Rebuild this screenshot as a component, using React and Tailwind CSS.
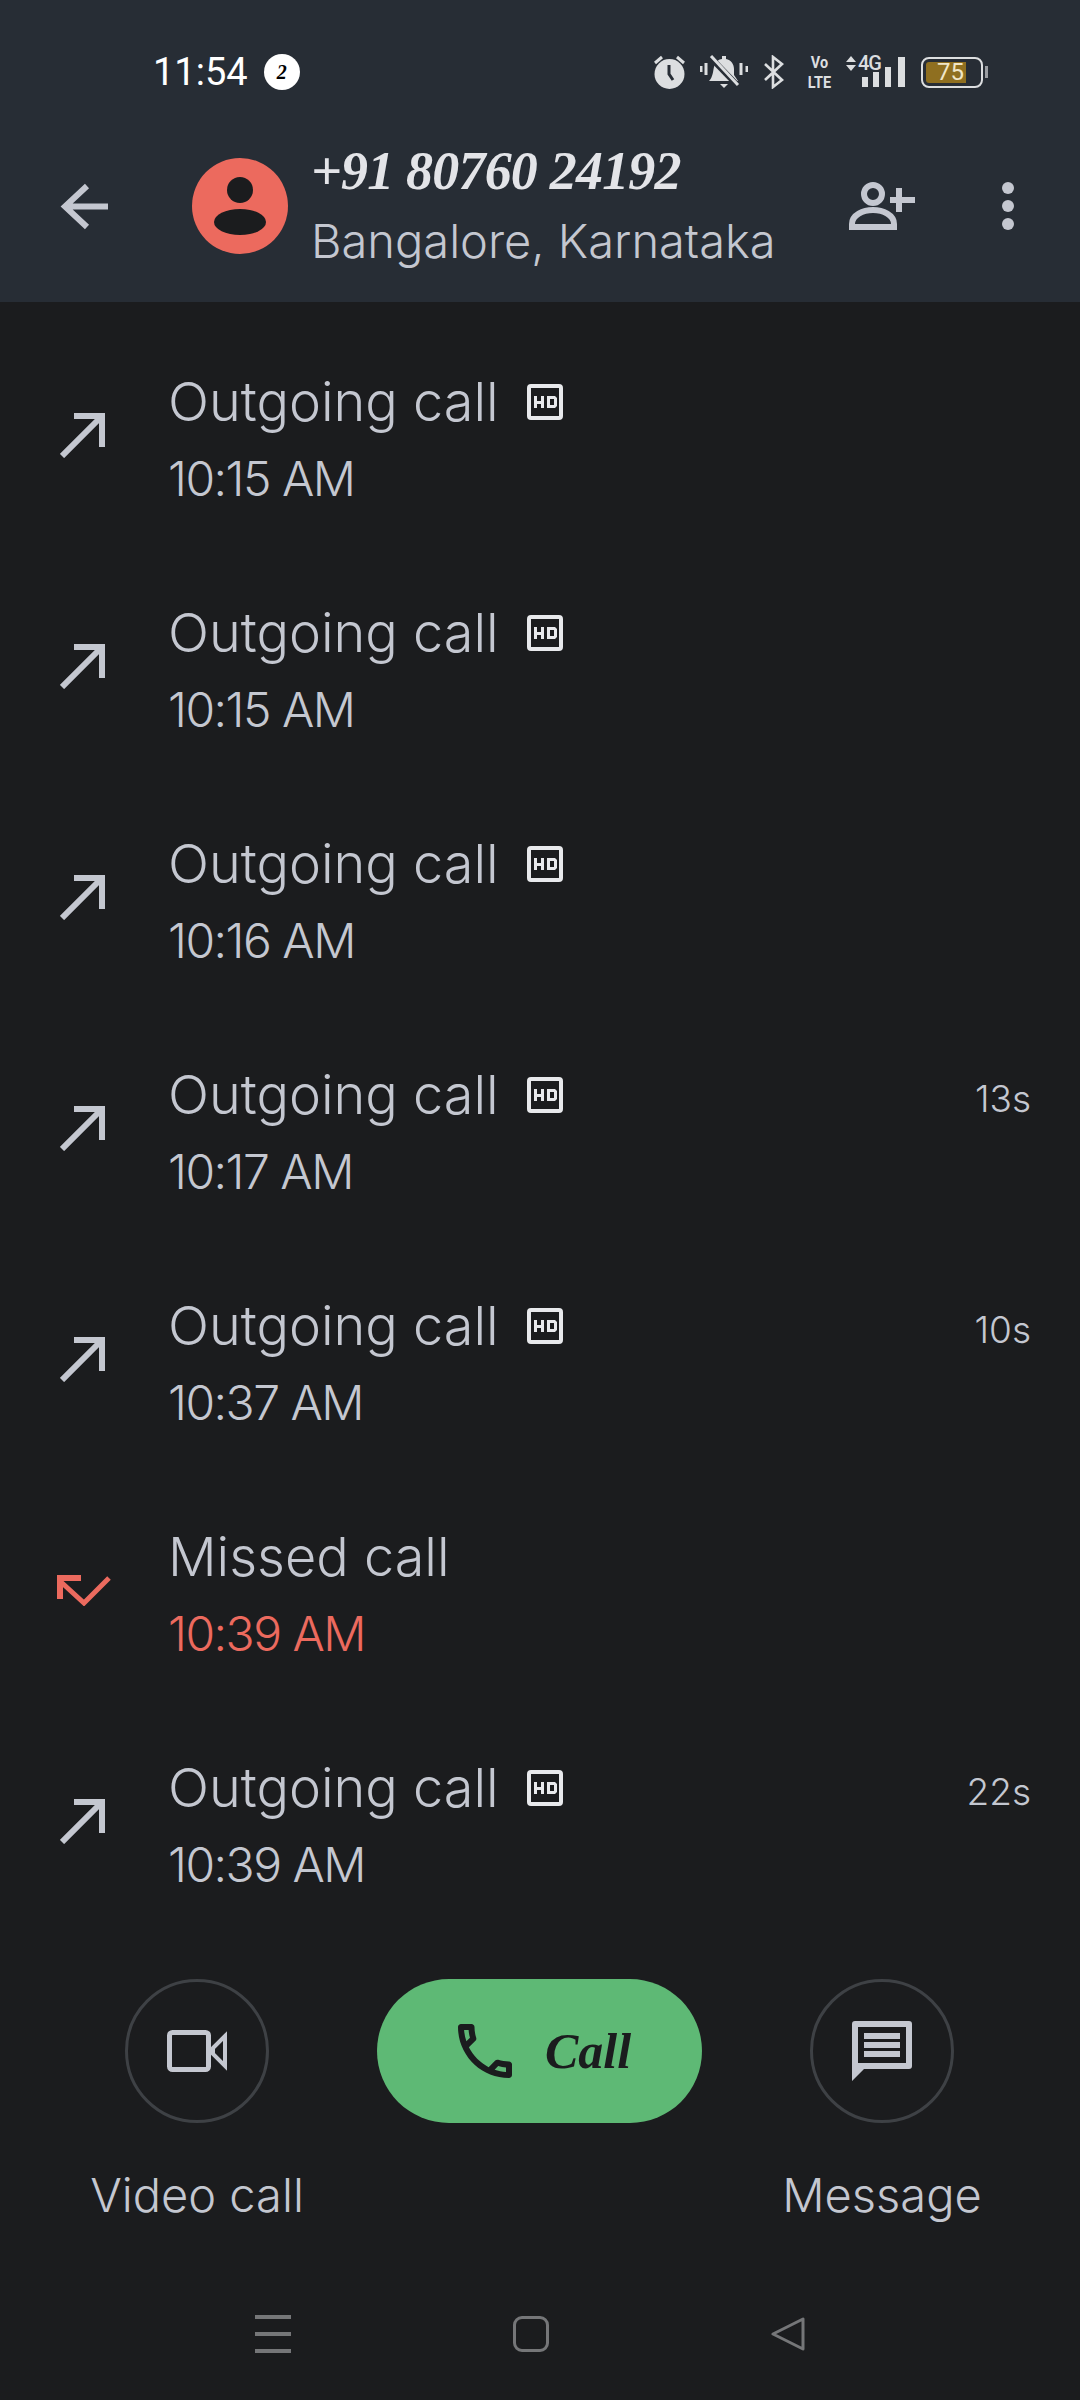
const sans = { fontFamily: 'Inter, sans-serif' };
const serif = { fontFamily: '"Liberation Serif", serif' };
const roboto = { fontFamily: 'Roboto, sans-serif' };

const OutIcon = () => (
  <svg width="45" height="45" viewBox="0 0 45 45">
    <path d="M2 43 L42 3 M14 3 H42 V34" fill="none" stroke="#c4c7d0" strokeWidth="6" />
  </svg>
);

const MissedIcon = () => (
  <svg width="54" height="31" viewBox="0 0 54 31">
    <path d="M52 3 L27 28 L4 7" fill="none" stroke="#ec6a5e" strokeWidth="5" />
    <path d="M0 0 H24 V6 H6 V24 H0 Z" fill="#ec6a5e" />
  </svg>
);

const HdIcon = () => (
  <svg width="36" height="36" viewBox="0 0 36 36">
    <rect x="2" y="2" width="32" height="32" rx="2" fill="none" stroke="#e8e9ec" strokeWidth="4" />
    <path d="M7 12 h3 v5 h4 v-5 h3 v12 h-3 v-4 h-4 v4 h-3 Z" fill="#e8e9ec" />
    <path fillRule="evenodd" d="M20 12 h8 l2 2 v8 l-2 2 h-8 Z M23 15 v6 h4 v-6 Z" fill="#e8e9ec" />
  </svg>
);

const rows = [
  { time: '10:15 AM' },
  { time: '10:15 AM' },
  { time: '10:16 AM' },
  { time: '10:17 AM', dur: '13s' },
  { time: '10:37 AM', dur: '10s' },
  { time: '10:39 AM', missed: true },
  { time: '10:39 AM', dur: '22s' },
];

const CallRow = ({ time, dur, missed }) => (
  <div className="flex items-center h-[231px]">
    <div className="w-[168px] shrink-0 flex items-center pb-[4px]">
      {missed ? <div className="ml-[57px]"><MissedIcon /></div> : <div className="ml-[60px]"><OutIcon /></div>}
    </div>
    <div className="flex-1 pr-[49px] pt-[6px]">
      <div className="flex items-center h-[76px] font-[350] text-[54px] text-[#c4c7d0]">
        <span>{missed ? 'Missed call' : 'Outgoing call'}</span>
        {!missed && <div className="ml-[28px]"><HdIcon /></div>}
        {dur && <span className="ml-auto text-[37px] leading-none mt-[8px]">{dur}</span>}
      </div>
      <div className={`leading-[78px] font-[350] text-[48px] tracking-[-1.5px] ${missed ? 'text-[#ec6a5e]' : 'text-[#c4c7d0]'}`}>{time}</div>
    </div>
  </div>
);

const StatusIcons = () => (
  <div className="ml-auto flex items-center pr-[92px] text-[#dcdee0]" style={roboto}>
    <svg width="31" height="34" viewBox="0 0 31 34" className="mr-[15px]">
      <circle cx="15.5" cy="19" r="15" fill="#dcdee0" />
      <path d="M15 10 V19 L19 25" fill="none" stroke="#272d35" strokeWidth="3" />
      <path d="M1 8 L8 2 M30 8 L23 2" stroke="#dcdee0" strokeWidth="3" />
    </svg>
    <svg width="48" height="34" viewBox="0 0 48 34" className="mr-[16px]">
      <path d="M9 26 C13 22 13 16 14 12 C15 7 19 4 22 4 V1 H26 V4 C31 5 34 9 34 14 V20 L38 26 Z" fill="#dcdee0" />
      <path d="M20 29 H28 L24 33 Z" fill="#dcdee0" />
      <path d="M9 1 L38 31" stroke="#272d35" strokeWidth="6" />
      <path d="M11 1 L38 30" stroke="#dcdee0" strokeWidth="3" />
      <path d="M1 11 V17 M6 8 V20 M41 8 V20 M47 11 V17" stroke="#dcdee0" strokeWidth="3" />
    </svg>
    <svg width="20" height="34" viewBox="0 0 20 34" className="mr-[25px]">
      <path d="M1 9 L18 25 L9 32 V2 L18 9 L1 25" fill="none" stroke="#dcdee0" strokeWidth="2.6" />
    </svg>
    <div className="w-[21px] mr-[16px] flex justify-center font-bold text-[17px] leading-[20px] text-center scale-x-[.85]">
      <div>Vo<br />LTE</div>
    </div>
    <div className="relative w-[59px] h-[34px] mr-[16px]">
      <svg width="59" height="34" viewBox="0 0 59 34" className="absolute left-0 top-0">
        <path d="M0 7 L5 1 L10 7 Z M0 10 H10 L5 16 Z" fill="#dcdee0" />
        <path d="M16 32 V22 H22 V32 Z M27 32 V17 H33 V32 Z M39 32 V12 H45 V32 Z M52 32 V2 H59 V32 Z" fill="#dcdee0" />
      </svg>
      <span className="absolute left-[12px] top-[-2px] text-[20px] leading-[20px] font-medium tracking-[-1px]">4G</span>
    </div>
    <div className="flex items-center">
      <div className="w-[62px] h-[31px] border-[2px] border-[#dcdee0] rounded-[8px] p-[3px] flex">
        <div className="w-[40px] bg-[#8f6f20] rounded-l-[3px] flex items-center justify-end pr-[2px] text-[24px] leading-none text-[#f0e6c8]">75</div>
      </div>
      <div className="w-[3px] h-[12px] bg-[#9a9da2] ml-[2px]" />
    </div>
  </div>
);

export default function App() {
  return (
    <div className="w-[1080px] h-[2400px] bg-[#1b1c1e] flex flex-col overflow-hidden" style={sans}>
      <div className="bg-[#272d35] h-[302px] shrink-0">
        <div className="h-[108px] pt-[36px] pl-[153px] flex items-center">
          <span className="text-[38px] text-white leading-none" style={roboto}>11:54</span>
          <div className="ml-[16px] w-[36px] h-[36px] rounded-full bg-white flex items-center justify-center text-[20px] font-bold italic text-black" style={serif}>2</div>
          <StatusIcons />
        </div>
        <div className="h-[194px] pt-[2px] pl-[60px] pr-[66px] flex items-center">
          <svg width="48" height="47" viewBox="0 0 48 47">
            <path d="M48 23.5 H6 M27 3 L5 23.5 L27 44" fill="none" stroke="#c4c7d0" strokeWidth="6" />
          </svg>
          <div className="ml-[84px] w-[96px] h-[96px] rounded-full bg-[#ec6a5e] flex flex-col items-center justify-center">
            <div className="w-[26px] h-[26px] rounded-full bg-[#1b1c1e]" />
            <div className="w-[52px] h-[26px] rounded-[50%] bg-[#1b1c1e] mt-[6px]" />
          </div>
          <div className="ml-[23px] flex-1">
            <div className="text-[54px] leading-[68px] font-bold italic text-[#e3e4e8] tracking-[-0.8px]" style={serif}>+91 80760 24192</div>
            <div className="text-[47px] leading-[68px] font-[350] text-[#c4c7d0] mt-[2px]">Bangalore, Karnataka</div>
          </div>
          <svg width="66" height="48" viewBox="0 0 66 48">
            <circle cx="24" cy="12" r="9" fill="none" stroke="#c4c7d0" strokeWidth="6" />
            <path d="M3 45 V42 C3 33 14 28 24 28 C34 28 45 33 45 42 V45 Z" fill="none" stroke="#c4c7d0" strokeWidth="6" />
            <path d="M50 6 V30 M41 18 H66" stroke="#c4c7d0" strokeWidth="6" />
          </svg>
          <div className="ml-[87px] flex flex-col gap-[6px]">
            <div className="w-[12px] h-[12px] rounded-full bg-[#c4c7d0]" />
            <div className="w-[12px] h-[12px] rounded-full bg-[#c4c7d0]" />
            <div className="w-[12px] h-[12px] rounded-full bg-[#c4c7d0]" />
          </div>
        </div>
      </div>

      <div className="pt-[20px]">
        {rows.map((r, i) => <CallRow key={i} {...r} />)}
      </div>

      <div className="mt-[40px] pl-[67px] flex gap-[50px]">
        <div className="w-[260px] flex flex-col items-center">
          <div className="w-[144px] h-[144px] rounded-full border-[3px] border-[#3e4145] flex items-center justify-center">
            <svg width="60" height="42" viewBox="0 0 60 42">
              <rect x="2.5" y="2.5" width="39" height="37" rx="3" fill="none" stroke="#c4c7d0" strokeWidth="5" />
              <path d="M46 18 L58 6 V36 L46 24 Z" fill="none" stroke="#c4c7d0" strokeWidth="4" />
            </svg>
          </div>
          <div className="mt-[42px] text-[47px] font-[350] leading-[60px] text-[#c4c7d0]">Video call</div>
        </div>
        <div className="w-[325px] h-[144px] rounded-full bg-[#5eb975] flex items-center justify-center gap-[33px] pl-[10px]">
          <svg width="54" height="54" viewBox="3 3 18 18" fill="#1b1c1e">
            <path d="M6.54 5c.06.89.21 1.76.45 2.59l-1.2 1.2c-.41-1.2-.67-2.47-.76-3.79h1.51m9.86 12.02c.85.24 1.72.39 2.6.45v1.49c-1.32-.09-2.59-.35-3.8-.75l1.2-1.19M7.5 3H4c-.55 0-1 .45-1 1 0 9.39 7.61 17 17 17 .55 0 1-.45 1-1v-3.49c0-.55-.45-1-1-1-1.24 0-2.45-.2-3.57-.57-.1-.04-.21-.05-.31-.05-.26 0-.51.1-.71.29l-2.2 2.2c-2.83-1.45-5.15-3.76-6.59-6.59l2.2-2.2c.28-.28.36-.67.25-1.02C8.7 6.45 8.5 5.25 8.5 4c0-.55-.45-1-1-1z" />
          </svg>
          <span className="text-[50px] font-bold italic text-[#1b1c1e]" style={serif}>Call</span>
        </div>
        <div className="w-[260px] flex flex-col items-center">
          <div className="w-[144px] h-[144px] rounded-full border-[3px] border-[#3e4145] flex items-center justify-center">
            <svg width="60" height="60" viewBox="0 0 60 60">
              <path fillRule="evenodd" d="M3 0 H57 Q60 0 60 3 V45 Q60 48 57 48 H12 L0 60 V3 Q0 0 3 0 Z M6 6 V42 H54 V6 Z" fill="#c4c7d0" />
              <path d="M12 12 H48 V18 H12 Z M12 21 H48 V27 H12 Z M12 30 H48 V36 H12 Z" fill="#c4c7d0" />
            </svg>
          </div>
          <div className="mt-[42px] text-[47px] font-[350] leading-[60px] text-[#c4c7d0]">Message</div>
        </div>
      </div>

      <div className="mt-auto h-[132px] pl-[255px] flex items-center gap-[222px]">
        <div className="w-[36px] flex flex-col gap-[13px]">
          <div className="h-[4px] bg-[#757678]" />
          <div className="h-[4px] bg-[#757678]" />
          <div className="h-[4px] bg-[#757678]" />
        </div>
        <div className="w-[36px] h-[36px] rounded-[9px] border-[3px] border-[#757678]" />
        <svg width="34" height="36" viewBox="0 0 34 36">
          <path d="M32 3 V33 L2 18 Z" fill="none" stroke="#757678" strokeWidth="3" strokeLinejoin="round" />
        </svg>
      </div>
    </div>
  );
}
